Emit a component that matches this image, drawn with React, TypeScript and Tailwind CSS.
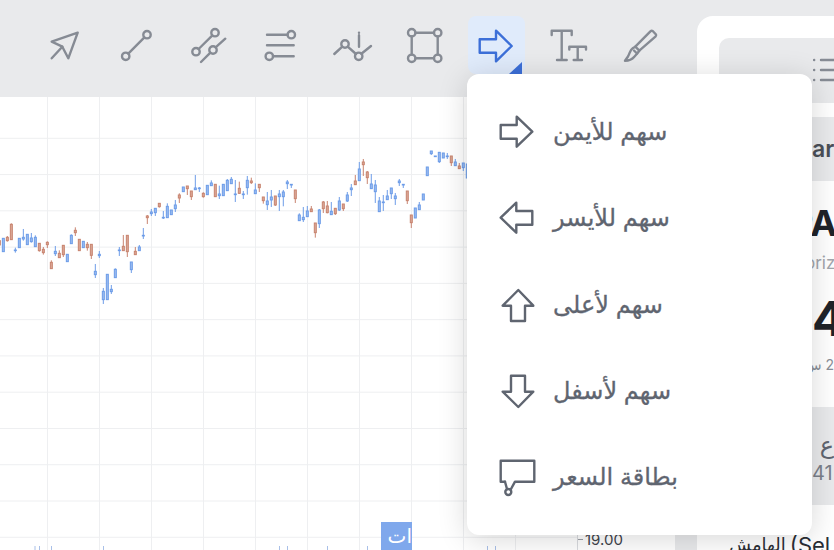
import type { ReactNode } from 'react'

// [wick top, wick bottom, body top, body bottom, is red] in 3x crop units, one every 12 units from x=-2
const candles: [number, number, number, number, number][] = [
  [332,345,332,345,1],[325,365,325,365,0],[318,335,322,332,1],[280,330,283,329,1],[353,368,360,362,0],[325,353,325,353,0],
  [297,332,322,327,0],[313,344,313,344,0],[309,338,324,335,0],[316,350,322,350,0],[339,365,340,362,1],[351,374,358,368,1],
  [334,354,337,344,1],[391,416,397,416,1],[348,378,364,371,0],[361,384,370,383,1],[345,381,346,374,1],[373,395,373,395,0],
  [313,341,316,341,0],[292,318,301,308,1],[328,362,328,362,1],[334,353,334,353,0],[336,362,343,353,1],[343,387,343,376,1],
  [402,444,424,434,0],[363,384,373,377,0],[474,522,484,509,0],[433,509,433,509,0],[465,492,478,485,0],[415,443,418,443,0],
  [351,378,360,362,0],[315,362,349,362,1],[316,381,316,365,1],[396,429,396,419,0],[351,375,364,374,1],[345,362,351,362,0],
  [294,327,316,318,0],[255,282,258,263,1],[237,258,246,251,0],[234,258,235,248,0],[219,233,220,230,1],[243,267,262,264,0],
  [220,263,229,263,0],[240,254,240,254,0],[210,246,225,236,0],[190,219,195,204,1],[171,185,171,185,0],[168,195,168,176,1],
  [183,210,183,200,1],[135,179,174,179,0],[171,186,174,176,0],[187,203,190,200,1],[166,194,166,194,0],[151,168,159,167,0],
  [163,200,163,200,1],[167,207,192,197,0],[163,197,163,197,0],[147,182,151,182,0],[141,161,148,161,0],[150,216,192,194,0],
  [155,192,175,190,1],[183,207,192,194,0],[138,194,151,173,0],[143,162,153,158,1],[160,191,180,191,0],[162,186,163,173,1],
  [201,221,201,212,1],[186,240,213,224,0],[180,231,201,210,0],[198,228,198,225,1],[180,243,192,200,0],[180,229,186,200,0],
  [150,177,156,161,0],[163,174,163,165,0],[180,219,180,206,1],[250,273,255,272,0],[231,276,262,269,0],[228,261,243,260,0],
  [228,246,237,245,1],[279,323,279,308,1],[237,294,240,281,0],[213,249,216,236,1],[213,250,228,248,1],[216,255,244,254,0],
  [234,255,235,251,1],[201,243,213,240,0],[222,243,222,236,1],[186,216,195,213,0],[162,198,174,179,0],[135,165,153,164,1],
  [96,153,117,152,0],[87,138,96,104,1],[123,162,126,143,1],[132,177,162,176,0],[150,219,165,185,0],[201,246,213,245,0],
  [195,243,216,218,0],[180,210,198,209,0],[174,207,174,191,0],[189,225,198,206,0],[147,168,153,158,0],[162,174,163,165,0],
  [183,222,183,212,1],[255,294,255,278,1],[234,264,234,264,0],[216,240,225,239,0],[192,210,192,210,0],[111,137,111,137,0],
  [63,75,63,71,0],[78,80,78,80,0],[66,99,67,95,0],[69,84,69,84,0],[69,87,78,80,0],[78,108,78,98,1],
  [87,108,96,107,0],[99,117,108,116,1],[99,123,99,113,0],[102,144,102,144,0],
]

const gridX = [47.5, 99.5, 151.5, 203.5, 255.5, 307.5, 359.5, 411.5, 463.5, 515.5]
const gridY = Array.from({ length: 12 }, (_, i) => 41.3 + i * 36.27)
const volumeTicks = [35, 39.5, 51.5, 103.5, 279.5, 287.5, 327.5, 367.5, 487.5, 495.5]

function Chart() {
  return (
    <svg width="675" height="453" className="block">
      {gridX.map((x) => (
        <line key={x} x1={x} x2={x} y1="0" y2="453" stroke="#eeeff1" />
      ))}
      {gridY.map((y) => (
        <line key={y} x1="0" x2="578" y1={y} y2={y} stroke="#eeeff1" />
      ))}
      <line x1="577.5" x2="577.5" y1="0" y2="453" stroke="#d9dbdf" />
      {volumeTicks.map((x) => (
        <line key={x} x1={x} x2={x} y1="449" y2="453" stroke="#a9c0e8" />
      ))}
      <g transform="translate(0 33) scale(0.3333)">
        {candles.map(([top, bot, bodyTop, bodyBot, red], i) => {
          const x = -2 + i * 12
          const stroke = red ? '#c8846f' : '#6c9ce8'
          const fill = red ? '#dba999' : '#9dbdf0'
          return (
            <g key={i}>
              <line x1={x} x2={x} y1={top} y2={bot} stroke={stroke} strokeWidth="3" />
              <rect x={x - 3} y={bodyTop} width="6" height={Math.max(bodyBot - bodyTop, 2)} fill={fill} stroke={stroke} strokeWidth="3" />
            </g>
          )
        })}
      </g>
    </svg>
  )
}

function Icon({ children, color = '#868b94', width = 2.4 }: { children: ReactNode; color?: string; width?: number }) {
  return (
    <svg width="32" height="32" viewBox="0 0 32 32" fill="none" stroke={color} strokeWidth={width} strokeLinecap="round" strokeLinejoin="round" className="overflow-visible">
      {children}
    </svg>
  )
}

const toolIcons: ReactNode[] = [
  <Icon key="cursor">
    <path d="M29.7 3.7 3.7 12.7 14.3 17.7 20.3 29.3Z" />
    <path d="M14.3 17.7 3.7 29.3" />
  </Icon>,
  <Icon key="line">
    <circle cx="27" cy="5.7" r="3.7" />
    <circle cx="5.7" cy="27.3" r="3.7" />
    <path d="M8.3 24.7 24.4 8.3" />
  </Icon>,
  <Icon key="channel">
    <circle cx="23" cy="3.7" r="3.7" />
    <circle cx="4" cy="22.7" r="3.7" />
    <circle cx="21" cy="21" r="3.7" />
    <path d="M6.6 20 20.4 6.3" />
    <path d="M9 33 18.4 23.6M23.6 18.4 33.3 9.7" />
  </Icon>,
  <Icon key="levels">
    <path d="M3 5.7H23.6M3 16.3H29.7M9 27.3H29.7" />
    <circle cx="27.3" cy="5.7" r="3.7" />
    <circle cx="5.3" cy="27.3" r="3.7" />
  </Icon>,
  <Icon key="info">
    <path d="M-1.7 25 6.3 17.6M11.7 17.6 20 25M25.4 24.8 35 17" />
    <circle cx="9" cy="15" r="3.7" />
    <circle cx="22.7" cy="27.3" r="3.7" />
    <path d="M23 6.3V17.7M23 3.6V3.8" />
  </Icon>,
  <Icon key="rect">
    <path d="M7.4 3.7H26M29.7 7.4V25.6M26 29.3H7.4M3.7 25.6V7.4" />
    <circle cx="3.7" cy="3.7" r="3.7" />
    <circle cx="29.7" cy="3.7" r="3.7" />
    <circle cx="3.7" cy="29.3" r="3.7" />
    <circle cx="29.7" cy="29.3" r="3.7" />
  </Icon>,
  <Icon key="arrow" color="#3c6fd8">
    <path d="M-.3 10.3H16V1.7L31.7 17 16 32.3V23.7H-.3Z" />
  </Icon>,
  <Icon key="text">
    <path d="M-.3 6V1.7H19.7V6M9.7 1.7V31M5 31H14.7" />
    <path d="M17.3 20.5V17.7H34V20.5M25.7 17.7V31M21.7 31H30" />
  </Icon>,
  <Icon key="brush">
    <path d="M28.7 2 32 5.5C32.3 6.3 32 7 31.4 7.6L15.3 21.7 11.3 17.7 26.4 2.3C27.1 1.7 28 1.6 28.7 2Z" />
    <path d="M11.3 17.7 8.7 19.3C6 21 6 24 4 27.5L1 31.7C5 31.7 8 30.5 10.3 27.7L13 24.8 15.3 21.7" />
    <path d="M10 21.5 13 24.5" />
  </Icon>,
]

const menuColor = '#5f6570'

const menuItems: { label: string; icon: ReactNode }[] = [
  { label: 'سهم للأيمن', icon: <path d="M.7 11H16.7V2.7L32.3 17.7 16.7 32.7V24.7H.7Z" /> },
  { label: 'سهم للأيسر', icon: <path d="M32.3 11H16.3V2.7L.7 17.7 16.3 32.7V24.7H32.3Z" /> },
  { label: 'سهم لأعلى', icon: <path d="M18.3 3 2.7 18.7H11V34H25V18.7H33.3Z" /> },
  { label: 'سهم لأسفل', icon: <path d="M11 2.7H25V18.7H33.3L18.3 34 2.7 18.7H11Z" /> },
  {
    label: 'بطاقة السعر',
    icon: (
      <>
        <path d="M5 22.7H.7V1.7H34.3V22.7H15L11 30" />
        <path d="M5 22.7 7 30" />
        <circle cx="8.3" cy="33" r="3" />
      </>
    ),
  },
]

export default function App() {
  return (
    <div className="relative flex h-[550px] w-[834px] overflow-hidden bg-[#e9eaec] font-['Inter','DejaVu_Sans',sans-serif]">
      <div className="flex w-[697px] shrink-0 flex-col">
        <div className="flex h-[97px] shrink-0 items-start gap-[15px] pl-9 pt-4">
          {toolIcons.map((icon, i) => (
            <div key={i} className={`relative flex h-[58px] w-[57px] items-start justify-center rounded-lg pr-[2px] pt-[13px] ${i === 6 ? 'bg-[#e0ebfb]' : ''}`}>
              {icon}
              {i === 6 && <div className="absolute bottom-0 right-[3px] h-0 w-0 border-b-[12px] border-l-[13px] border-b-[#3c6fd8] border-l-transparent" />}
            </div>
          ))}
        </div>
        <div className="relative h-[453px] w-[675px] bg-white">
          <Chart />
          <div dir="rtl" className="absolute bottom-0 left-[381px] flex h-7 w-[31px] items-center bg-[#7fa8ec] text-xl text-white">
            ات
          </div>
          <div className="absolute left-[578px] top-[435px] flex items-center gap-[2px] text-[15px] leading-none text-[#3f444c]">
            <span className="h-px w-[5px] bg-[#9ca0a8]" />
            19.00
          </div>
        </div>
      </div>

      <div className="mt-4 flex flex-1 flex-col overflow-hidden rounded-tl-2xl bg-white pl-[22px] pt-[22px]">
        <div className="flex h-[65px] shrink-0 items-start rounded-tl-[10px] bg-[#e9eaec] pl-[94px] pt-5">
          <svg width="21" height="24" viewBox="0 0 21 24" fill="none" stroke="#868b94" strokeWidth="2.4" strokeLinecap="round" className="shrink-0">
            <path d="M1 2h.2M1 12h.2M1 22h.2M8 2h20M8 12h20M8 22h20" />
          </svg>
        </div>
        <div className="mt-3.5 flex h-16 shrink-0 items-center overflow-hidden bg-[#e9eaec] pl-[93px] text-[23px] font-semibold text-[#4b5059]">
          ar
        </div>
        <div className="h-[226px] shrink-0 overflow-hidden pt-[20px] whitespace-nowrap">
          <div className="pl-[71px] text-4xl font-bold leading-[44px] text-[#1f2329]">PA</div>
          <div className="mt-[6px] pl-[86px] text-[17px] leading-6 text-[#a2a6ad]">oriz</div>
          <div className="mt-[18px] pl-[93px] text-5xl font-bold leading-[52px] text-[#1f2329]">4</div>
          <div dir="rtl" className="mt-[10px] ml-[93px] w-[22px] text-sm leading-5 text-[#8a8f97]">2 س</div>
        </div>
        <div className="flex h-[98px] shrink-0 flex-col overflow-hidden bg-[#e9eaec] pl-[93px] pt-6">
          <div dir="rtl" className="text-2xl font-medium leading-7 text-[#5f6570]">ع</div>
          <div className="text-xl leading-7 text-[#7b808a]">41</div>
        </div>
        <div className="mt-[26px] flex h-7 shrink-0 items-start gap-1 whitespace-nowrap pl-[10px] leading-7 text-[#2a2e35]">
          <span dir="rtl" className="text-lg">الهامش</span>
          <span className="text-[22px]">(Sel</span>
        </div>
      </div>

      <div className="absolute left-[467px] top-[74px] flex h-[461px] w-[345px] flex-col rounded-xl bg-white py-[15px] shadow-[0_4px_30px_rgba(0,0,0,0.16)]">
        {menuItems.map((item) => (
          <div key={item.label} className="flex flex-1 items-center pl-[33px]">
            <svg width="36" height="36" viewBox="0 0 36 36" fill="none" stroke={menuColor} strokeWidth="2.4" strokeLinejoin="round" strokeLinecap="round" className="shrink-0 overflow-visible">
              {item.icon}
            </svg>
            <span dir="rtl" className="ml-[17px] text-2xl text-[#5f6570] [-webkit-text-stroke:0.3px_#5f6570]">
              {item.label}
            </span>
          </div>
        ))}
      </div>
    </div>
  )
}
